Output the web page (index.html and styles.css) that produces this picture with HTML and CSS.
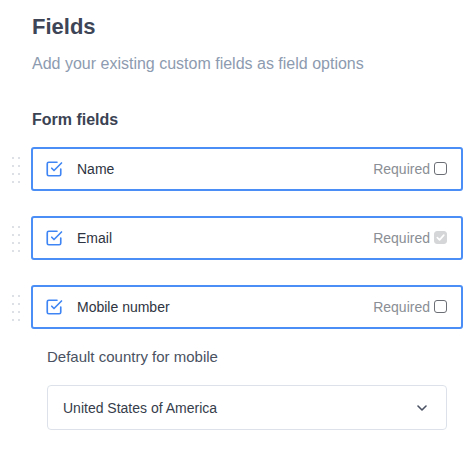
FILE: index.html
```html
<!DOCTYPE html>
<html lang="en">
<head>
<meta charset="utf-8">
<title>Fields</title>
<link rel="stylesheet" href="styles.css">
</head>
<body>
<main class="page">
  <header class="header">
    <h1 class="title">Fields</h1>
    <p class="subtitle">Add your existing custom fields as field options</p>
    <h2 class="section-title">Form fields</h2>
  </header>

  <ul class="field-list">
    <li class="field-row">
      <span class="drag-handle"><i></i><i></i><i></i><i></i><i></i><i></i><i></i><i></i></span>
      <div class="field-card">
        <svg class="field-icon" viewBox="0 0 24 24" width="18" height="18"><polyline points="9 11 12 14 22 4"/><path d="M21 12v7a2 2 0 0 1-2 2H5a2 2 0 0 1-2-2V5a2 2 0 0 1 2-2h11"/></svg>
        <span class="field-name">Name</span>
        <span class="required">Required <span class="checkbox"></span></span>
      </div>
    </li>
    <li class="field-row">
      <span class="drag-handle"><i></i><i></i><i></i><i></i><i></i><i></i><i></i><i></i></span>
      <div class="field-card">
        <svg class="field-icon" viewBox="0 0 24 24" width="18" height="18"><polyline points="9 11 12 14 22 4"/><path d="M21 12v7a2 2 0 0 1-2 2H5a2 2 0 0 1-2-2V5a2 2 0 0 1 2-2h11"/></svg>
        <span class="field-name">Email</span>
        <span class="required">Required <span class="checkbox checkbox--checked-disabled"><svg viewBox="0 0 12 12" width="11" height="11"><polyline points="2.5 6.2 5 8.6 9.6 3.4"/></svg></span></span>
      </div>
    </li>
    <li class="field-row">
      <span class="drag-handle"><i></i><i></i><i></i><i></i><i></i><i></i><i></i><i></i></span>
      <div class="field-card">
        <svg class="field-icon" viewBox="0 0 24 24" width="18" height="18"><polyline points="9 11 12 14 22 4"/><path d="M21 12v7a2 2 0 0 1-2 2H5a2 2 0 0 1-2-2V5a2 2 0 0 1 2-2h11"/></svg>
        <span class="field-name">Mobile number</span>
        <span class="required">Required <span class="checkbox"></span></span>
      </div>
    </li>
  </ul>

  <section class="country">
    <div class="country-label">Default country for mobile</div>
    <div class="select">
      <span>United States of America</span>
      <svg class="chevron" viewBox="0 0 10 6" width="10" height="6"><polyline points="1 1 5 5 9 1"/></svg>
    </div>
  </section>
</main>
</body>
</html>
```

FILE: styles.css
```css
* { box-sizing: border-box; }

html, body {
  margin: 0;
  padding: 0;
  background: #ffffff;
}

body {
  font-family: "Liberation Sans", Arial, Helvetica, sans-serif;
  color: #2f3542;
}

.page {
  padding: 13px 13px 0 0;
}

.header {
  padding-left: 32px;
}

.title {
  margin: 0;
  font-size: 22px;
  line-height: 28px;
  font-weight: 700;
  color: #3d4556;
}

.subtitle {
  margin: 12px 0 0;
  font-size: 16px;
  line-height: 22px;
  color: #8d9bb0;
}

.section-title {
  margin: 34px 0 0;
  font-size: 16px;
  line-height: 22px;
  font-weight: 700;
  color: #3b4353;
}

.field-list {
  list-style: none;
  margin: 16px 0 0;
  padding: 0 0 0 12px;
  display: flex;
  flex-direction: column;
  gap: 25px;
}

.field-row {
  display: flex;
  align-items: center;
}

.drag-handle {
  display: grid;
  grid-template-columns: 2px 2px;
  column-gap: 4px;
  row-gap: 6px;
  margin-right: 11px;
  margin-top: 2px;
}

.drag-handle i {
  display: block;
  width: 2px;
  height: 2px;
  border-radius: 50%;
  background: #d2d6dd;
}

.field-card {
  flex: 1;
  height: 44px;
  display: flex;
  align-items: center;
  border: 2px solid #4b8ef5;
  border-radius: 3px;
  padding: 0 14px 0 12px;
}

.field-icon {
  flex: none;
  margin-right: 14px;
  fill: none;
  stroke: #3f86f4;
  stroke-width: 2.2;
  stroke-linecap: round;
  stroke-linejoin: round;
}

.field-name {
  flex: 1;
  font-size: 14px;
  color: #2e3441;
}

.required {
  display: flex;
  align-items: center;
  gap: 4px;
  font-size: 14px;
  color: #8a8e95;
}

.checkbox {
  display: inline-flex;
  align-items: center;
  justify-content: center;
  width: 13px;
  height: 13px;
  border: 1px solid #6b6e74;
  border-radius: 3px;
  background: #ffffff;
  margin-top: -2px;
}

.checkbox--checked-disabled {
  border-color: #d5d6d8;
  background: #d5d6d8;
}

.checkbox svg {
  fill: none;
  stroke: #ffffff;
  stroke-width: 1.8;
  stroke-linecap: round;
  stroke-linejoin: round;
}

.country {
  padding-left: 47px;
  margin-top: 18px;
}

.country-label {
  font-size: 15px;
  line-height: 20px;
  color: #4a5262;
}

.select {
  margin-top: 18px;
  width: 400px;
  height: 45px;
  display: flex;
  align-items: center;
  justify-content: space-between;
  border: 1px solid #dde2ea;
  border-radius: 4px;
  padding: 0 19px 0 15px;
  font-size: 14px;
  color: #363d4b;
}

.chevron {
  fill: none;
  stroke: #4a5162;
  stroke-width: 1.6;
  stroke-linecap: round;
  stroke-linejoin: round;
}
```
